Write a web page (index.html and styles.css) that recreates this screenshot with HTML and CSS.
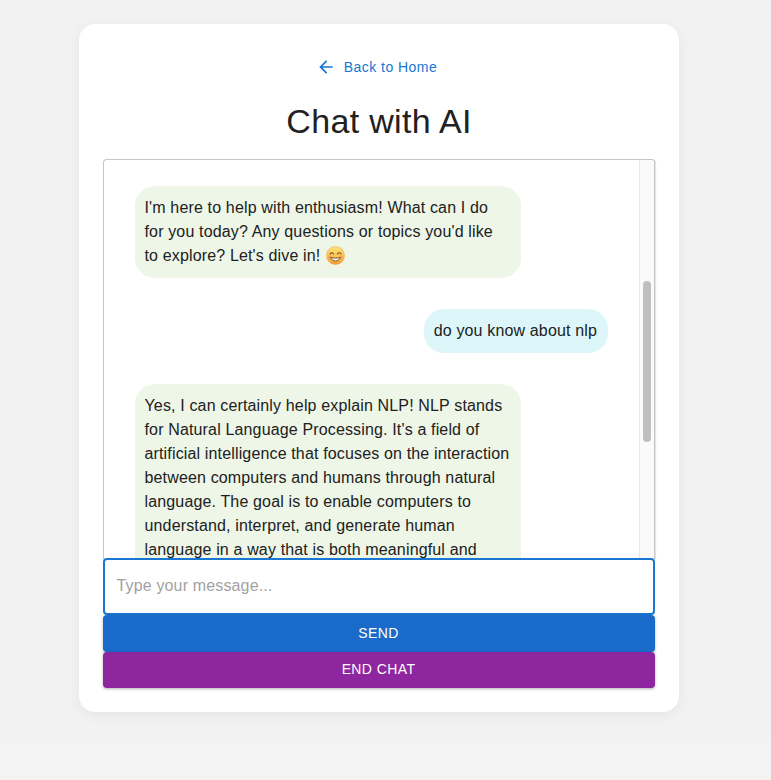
FILE: index.html
```html
<!DOCTYPE html>
<html lang="en">
<head>
<meta charset="utf-8">
<title>Chat with AI</title>
<link rel="stylesheet" href="styles.css">
</head>
<body>
<main class="card">
  <div class="back-row">
    <a class="back" href="#">
      <svg class="back-icon" viewBox="0 0 24 24" aria-hidden="true"><path d="M20 11H7.83l5.59-5.59L12 4l-8 8 8 8 1.41-1.41L7.83 13H20v-2z"/></svg>
      <span>Back to Home</span>
    </a>
  </div>
  <h1 class="title">Chat with AI</h1>
  <section class="chat">
    <div class="messages">
      <div class="bubble bot">I'm here to help with enthusiasm! What can I do for you today? Any questions or topics you'd like to explore? Let's dive in! <svg class="emoji" viewBox="0 0 20 20" aria-hidden="true"><defs><linearGradient id="face" x1="0" y1="0" x2="0" y2="1"><stop offset="0" stop-color="#fde27a"/><stop offset="0.55" stop-color="#fbc653"/><stop offset="1" stop-color="#f09a35"/></linearGradient></defs><circle cx="10" cy="10" r="9.5" fill="url(#face)" stroke="#e9a040" stroke-width=".5"/><circle cx="4.1" cy="11.8" r="2.1" fill="#f58a5a" opacity=".5"/><circle cx="15.9" cy="11.8" r="2.1" fill="#f58a5a" opacity=".5"/><path d="M4.2 8.4c.7-1.7 3-1.7 3.7 0M12.1 8.4c.7-1.7 3-1.7 3.7 0" fill="none" stroke="#6b4320" stroke-width="1.1" stroke-linecap="round"/><path d="M5 12c1.8 1 8.2 1 10 0-.9 5-9.1 5-10 0z" fill="#fff6e2" stroke="#6b4320" stroke-width=".9" stroke-linejoin="round"/></svg></div>
      <div class="bubble user">do you know about nlp</div>
      <div class="bubble bot long">Yes, I can certainly help explain NLP! NLP stands for Natural Language Processing. It's a field of artificial intelligence that focuses on the interaction between computers and humans through natural language. The goal is to enable computers to understand, interpret, and generate human language in a way that is both meaningful and</div>
    </div>
    <div class="track"><div class="thumb"></div></div>
  </section>
  <div class="input">Type your message...</div>
  <button class="btn send" type="button">Send</button>
  <button class="btn end" type="button">End Chat</button>
</main>
</body>
</html>
```

FILE: styles.css
```css
* { box-sizing: border-box; }
html {
  height: 100%;
  background: #f3f3f3;
}
body {
  margin: 0;
  height: 738px;
  background: #f2f2f2;
  font-family: "Liberation Sans", Arial, sans-serif;
}
.card {
  width: 600px;
  height: 688px;
  margin: 0 0 0 79px;
  padding: 24px;
  background: #fff;
  border-radius: 16px;
  box-shadow: 0 3px 14px rgba(0, 0, 0, 0.06);
  display: flex;
  flex-direction: column;
  position: relative;
  top: 24px;
}
.back-row {
  display: flex;
  justify-content: center;
  height: 36px;
  padding-top: 1px;
}
.back {
  display: flex;
  align-items: center;
  gap: 8px;
  padding-right: 5px;
  color: #1976d2;
  font-size: 14px;
  letter-spacing: 0.45px;
  text-decoration: none;
}
.back-icon { width: 20px; height: 20px; fill: #1976d2; }
.title {
  margin: 16px 0 0;
  height: 42px;
  font-size: 34px;
  line-height: 42px;
  font-weight: 400;
  letter-spacing: 0.33px;
  color: #212121;
  text-align: center;
}
.chat {
  margin-top: 17px;
  height: 400px;
  flex: none;
  display: flex;
  border: 1px solid #c6c6c6;
  border-bottom: 0;
  border-radius: 4px 4px 0 0;
  overflow: hidden;
  background: #fff;
  box-shadow: 1px 0 1px rgba(0, 0, 0, 0.12);
}
.messages {
  flex: 1;
  min-width: 0;
  overflow: hidden;
  display: flex;
  flex-direction: column;
  align-items: flex-start;
  gap: 31px;
  padding: 26px 31px 0;
}
.bubble {
  flex: none;
  padding: 10px 10px 10px 9.5px;
  border-radius: 20px;
  font-size: 16px;
  line-height: 24px;
  letter-spacing: 0.15px;
  color: #212121;
}
.bot { width: 386px; background: #edf6e7; }
.long { padding-bottom: 34px; }
.user {
  align-self: flex-end;
  padding-right: 11px;
  background: #ddf6fa;
}
.emoji { width: 19px; height: 19px; margin-left: 1px; vertical-align: -4px; }
.track {
  flex: none;
  width: 15px;
  background: #fafafa;
  border-left: 1px solid #e6e6e6;
  padding: 121px 3px 0;
}
.thumb {
  height: 161px;
  border-radius: 4px;
  background: #bfbfbf;
}
.input {
  flex: none;
  height: 57px;
  margin-top: -1px;
  position: relative;
  padding: 0 12px 2px 11.5px;
  border: 2px solid #1976d2;
  border-radius: 4px;
  background: #fff;
  display: flex;
  align-items: center;
  font-size: 16px;
  letter-spacing: 0.15px;
  color: #a2a2a2;
}
.btn {
  flex: none;
  display: block;
  width: 100%;
  padding: 0 1px 2px 0;
  border: 0;
  border-radius: 4px;
  color: #fff;
  font-family: inherit;
  font-size: 14px;
  font-weight: 400;
  letter-spacing: 0.4px;
  text-transform: uppercase;
  box-shadow: 0 1px 3px rgba(0, 0, 0, 0.3);
}
.send { height: 37px; background: #1a6bc9; position: relative; }
.end { height: 36px; background: #8e26a0; position: relative; }
```
